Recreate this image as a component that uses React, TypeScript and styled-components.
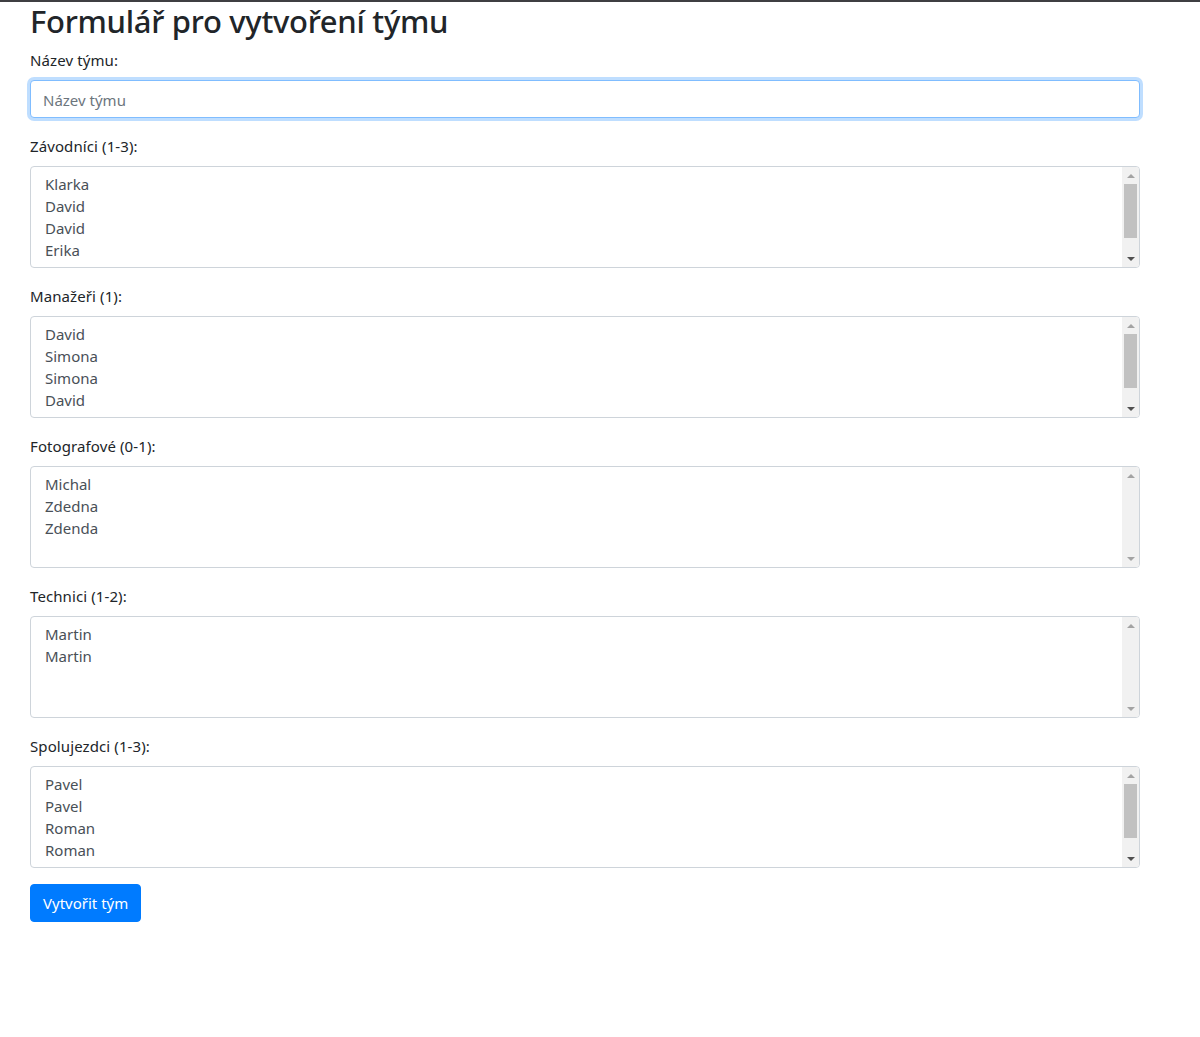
import * as React from 'react';
import styled, { createGlobalStyle } from 'styled-components'

interface IRoleList {
  label: string;
  people: string[];
}

const roles: IRoleList[] = [
  { label: 'Závodníci (1-3):', people: ['Klarka', 'David', 'David', 'Erika', 'Lukáš', 'Petra'] },
  { label: 'Manažeři (1):', people: ['David', 'Simona', 'Simona', 'David', 'Michal', 'Jana'] },
  { label: 'Fotografové (0-1):', people: ['Michal', 'Zdedna', 'Zdenda'] },
  { label: 'Technici (1-2):', people: ['Martin', 'Martin'] },
  { label: 'Spolujezdci (1-3):', people: ['Pavel', 'Pavel', 'Roman', 'Roman', 'Lukáš', 'Filip'] },
];

const VISIBLE_ROWS = 4;

const GlobalStyle = createGlobalStyle`
  html, body {
    margin: 0;
    padding: 0;
    background: #fff;
  }
  body {
    font-family: "Noto Sans", "Open Sans", sans-serif;
    font-size: 16px;
    line-height: 1.5;
    color: #212529;
    border-top: 2px solid #3f3f42;
  }
`

export default function App() {
  return (
    <>
      <GlobalStyle />
      <Page>
        <Heading>Formulář pro vytvoření týmu</Heading>
        <FormGroup>
          <Label>Název týmu:</Label>
          <TextInput placeholder="Název týmu" autoFocus />
        </FormGroup>
        {roles.map((role) => (
          <FormGroup key={role.label}>
            <Label>{role.label}</Label>
            <ListBox>
              <Options>
                {role.people.map((name, i) => (
                  <OptionRow key={i}>{name}</OptionRow>
                ))}
              </Options>
              <ScrollBar>
                <ArrowButton>
                  <Arrow $up $active={false} />
                </ArrowButton>
                <Track>
                  {role.people.length > VISIBLE_ROWS && <Thumb />}
                </Track>
                <ArrowButton>
                  <Arrow $up={false} $active={role.people.length > VISIBLE_ROWS} />
                </ArrowButton>
              </ScrollBar>
            </ListBox>
          </FormGroup>
        ))}
        <SubmitButton type="button">Vytvořit tým</SubmitButton>
      </Page>
    </>
  );
}

const Page = styled.div`
  width: 1110px;
  padding-left: 30px;
  box-sizing: content-box;
`

const Heading = styled.h2`
  margin: 0 0 8px 0;
  font-size: 31px;
  font-weight: 500;
  line-height: 38px;
  letter-spacing: -0.3px;
`

const FormGroup = styled.div`
  margin-bottom: 16px;
`

const Label = styled.label`
  display: block;
  margin-bottom: 8px;
  font-size: 15px;
  line-height: 24px;
  letter-spacing: 0.1px;
`

const TextInput = styled.input`
  display: block;
  width: 100%;
  height: 38px;
  box-sizing: border-box;
  padding: 7px 12px 5px 12px;
  font-family: inherit;
  font-size: 15px;
  line-height: 24px;
  color: #495057;
  background: #fff;
  border: 1px solid #80bdff;
  border-radius: 4px;
  box-shadow: 0 0 0 3px rgba(0, 123, 255, 0.25);
  outline: none;
  caret-color: #495057;

  &::placeholder {
    color: #6c757d;
  }
`

const ListBox = styled.div`
  display: flex;
  height: 102px;
  box-sizing: border-box;
  border: 1px solid #ced4da;
  border-radius: 4px;
  overflow: hidden;
  background: #fff;
`

const Options = styled.div`
  flex: 1;
  padding: 7px 12px 0 12px;
  overflow: hidden;
`

const OptionRow = styled.div`
  padding: 0 2px 1px 2px;
  font-size: 15px;
  line-height: 21px;
  color: #495057;
`

const ScrollBar = styled.div`
  width: 17px;
  display: flex;
  flex-direction: column;
  background: #f1f1f1;
`

const ArrowButton = styled.div`
  height: 17px;
  display: flex;
  align-items: center;
  justify-content: center;
`

const Arrow = styled.div<{ $up: boolean; $active: boolean }>`
  width: 0;
  height: 0;
  border-left: 4px solid transparent;
  border-right: 4px solid transparent;
  ${(p) => p.$up
    ? `border-bottom: 4px solid ${p.$active ? '#505050' : '#a3a3a3'};`
    : `border-top: 4px solid ${p.$active ? '#505050' : '#a3a3a3'};`}
`

const Track = styled.div`
  flex: 1;
  padding: 0 2px;
`

const Thumb = styled.div`
  height: 54px;
  background: #c1c1c1;
`

const SubmitButton = styled.button`
  display: block;
  height: 38px;
  padding: 6px 12px;
  font-family: inherit;
  font-size: 15px;
  line-height: 24px;
  color: #fff;
  background: #007bff;
  border: 1px solid #007bff;
  border-radius: 4px;
  cursor: pointer;
`
